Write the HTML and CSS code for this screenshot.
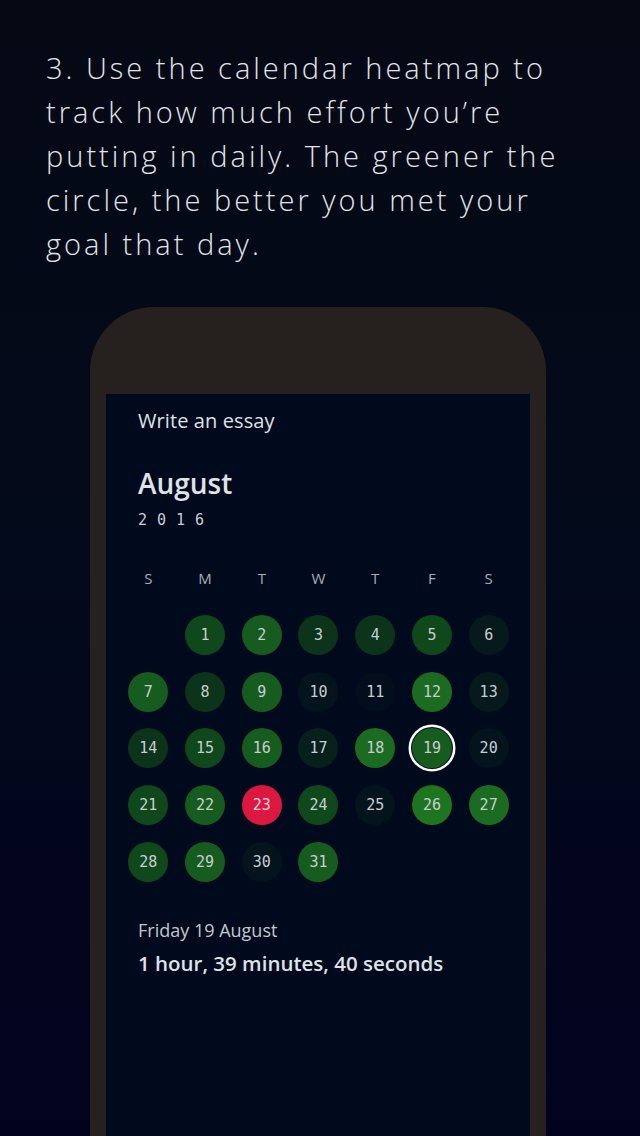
FILE: index.html
```html
<!DOCTYPE html>
<html>
<head>
<meta charset="utf-8">
<link rel="stylesheet" href="styles.css">
</head>
<body>
<div class="page">
  <p class="intro">3. Use the calendar heatmap to track how much effort you’re putting in daily. The greener the circle, the better you met your goal that day.</p>
  <div class="phone">
    <div class="screen">
      <div class="head">
        <div class="task">Write an essay</div>
        <div class="month">August</div>
        <div class="year">2016</div>
      </div>
      <div class="cal">
        <div class="dow">S</div><div class="dow">M</div><div class="dow">T</div><div class="dow">W</div><div class="dow">T</div><div class="dow">F</div><div class="dow">S</div>
        <div class="cell"></div>
        <div class="cell"><span class="day l3">1</span></div>
        <div class="cell"><span class="day l4">2</span></div>
        <div class="cell"><span class="day l2">3</span></div>
        <div class="cell"><span class="day l2">4</span></div>
        <div class="cell"><span class="day l3">5</span></div>
        <div class="cell"><span class="day l1">6</span></div>
        <div class="cell"><span class="day l4">7</span></div>
        <div class="cell"><span class="day l2">8</span></div>
        <div class="cell"><span class="day l4">9</span></div>
        <div class="cell"><span class="day l0">10</span></div>
        <div class="cell"><span class="day lz">11</span></div>
        <div class="cell"><span class="day l5">12</span></div>
        <div class="cell"><span class="day l1">13</span></div>
        <div class="cell"><span class="day l2">14</span></div>
        <div class="cell"><span class="day l3">15</span></div>
        <div class="cell"><span class="day l4">16</span></div>
        <div class="cell"><span class="day l1b">17</span></div>
        <div class="cell"><span class="day l5">18</span></div>
        <div class="cell"><span class="day l4 sel">19</span></div>
        <div class="cell"><span class="day l0">20</span></div>
        <div class="cell"><span class="day l3">21</span></div>
        <div class="cell"><span class="day l4">22</span></div>
        <div class="cell"><span class="day miss">23</span></div>
        <div class="cell"><span class="day l3">24</span></div>
        <div class="cell"><span class="day l0">25</span></div>
        <div class="cell"><span class="day l6">26</span></div>
        <div class="cell"><span class="day l5">27</span></div>
        <div class="cell"><span class="day l3">28</span></div>
        <div class="cell"><span class="day l4">29</span></div>
        <div class="cell"><span class="day l0">30</span></div>
        <div class="cell"><span class="day l4">31</span></div>
      </div>
      <div class="summary">
        <div class="date">Friday 19 August</div>
        <div class="dur">1 hour, 39 minutes, 40 seconds</div>
      </div>
    </div>
  </div>
</div>
</body>
</html>
```
FILE: styles.css
```css
* { box-sizing: border-box; }
html, body { margin: 0; padding: 0; }
body {
  width: 640px;
  height: 1136px;
  overflow: hidden;
  background: linear-gradient(180deg, #050914 0%, #030a1b 50%, #02021f 100%);
}
.page {
  display: flex;
  flex-direction: column;
  height: 1136px;
}
.intro {
  margin: 0;
  padding: 46px 0 0 46px;
  width: 578px;
  font-family: "Open Sans", Lato, sans-serif;
  font-weight: 300;
  font-size: 29px;
  line-height: 44px;
  letter-spacing: 3px;
  color: #e1e5eb;
  height: 307px;
}
.phone {
  margin-left: 90px;
  width: 456px;
  flex: 1;
  background: #26211f;
  border-radius: 64px 64px 0 0;
  padding: 87px 16px 0 16px;
  display: flex;
}
.screen {
  flex: 1;
  background: #000a1c;
  display: flex;
  flex-direction: column;
}
.head {
  padding: 14px 0 0 32px;
  color: #dfe2e6;
}
.task {
  font-family: "Open Sans", sans-serif;
  font-size: 20px;
  line-height: 26px;
  letter-spacing: 0.1px;
}
.month {
  margin-top: 31px;
  font-family: "Open Sans", sans-serif;
  font-weight: 600;
  font-size: 28px;
  line-height: 36px;
}
.year {
  margin-top: 9px;
  font-family: "DejaVu Sans Mono", monospace;
  font-size: 15px;
  line-height: 20px;
  letter-spacing: 10px;
  color: #c9cdd3;
}
.cal {
  margin: 20px 13px 0 14px;
  display: grid;
  grid-template-columns: repeat(7, 1fr);
  grid-auto-rows: 56.67px;
}
.dow {
  display: flex;
  align-items: center;
  justify-content: center;
  font-family: "Open Sans", sans-serif;
  font-size: 15px;
  color: #a9aeb6;
}
.cell {
  display: flex;
  align-items: center;
  justify-content: center;
}
.day {
  width: 40px;
  height: 40px;
  border-radius: 50%;
  display: flex;
  align-items: center;
  justify-content: center;
  font-family: "DejaVu Sans Mono", monospace;
  font-size: 15px;
  color: #c9cdd2;
}
.lz { background: #020e1b; }
.l0 { background: #03141c; }
.l1 { background: #061a1c; }
.l1b { background: #06201b; }
.l2 { background: #0b341a; }
.l3 { background: #0f481b; }
.l4 { background: #165c1e; }
.l5 { background: #1b6b20; }
.l6 { background: #1e7520; }
.miss { background: #dc1840; color: #f0d6dc; }
.sel { box-shadow: 0 0 0 1px #000a1c, 0 0 0 3.5px #ffffff; }
.summary {
  padding: 28px 0 0 32px;
  color: #dfe2e6;
}
.date {
  font-family: "Open Sans", sans-serif;
  font-size: 18px;
  line-height: 24px;
  color: #c4c8ce;
}
.dur {
  margin-top: 8px;
  font-family: "Open Sans", sans-serif;
  font-weight: 600;
  font-size: 20.5px;
  line-height: 26px;
}
```
